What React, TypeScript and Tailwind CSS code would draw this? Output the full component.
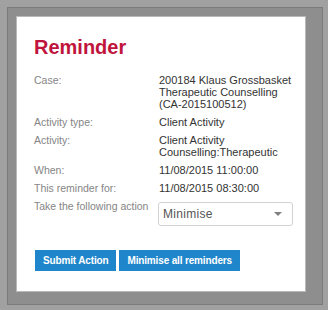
import React from 'react';

// Reminder dialog over a dimmed page.

const FONT = { fontFamily: '"Liberation Sans", Arial, sans-serif' };

interface Row {
  label: string;
  lines: string[];
}

const ROWS: Row[] = [
  {
    label: 'Case:',
    lines: ['200184 Klaus Grossbasket', 'Therapeutic Counselling', '(CA-2015100512)'],
  },
  { label: 'Activity type:', lines: ['Client Activity'] },
  { label: 'Activity:', lines: ['Client Activity', 'Counselling:Therapeutic'] },
  { label: 'When:', lines: ['11/08/2015 11:00:00'] },
  { label: 'This reminder for:', lines: ['11/08/2015 08:30:00'] },
];

function Caret() {
  return (
    <svg width="8" height="4" viewBox="0 0 8 4" className="mr-[10px]">
      <path d="M0 0 L8 0 L4 4 Z" fill="#808080" />
    </svg>
  );
}

export default function App() {
  return (
    <div className="w-[328px] h-[310px] bg-[#a1a1a1] pt-[7px] pl-[7px] overflow-hidden" style={FONT}>
      <div className="w-[316px] h-[298px] bg-[#8e8e8e] border border-[#7b7b7b] pt-[8px] pl-[8px]">
        <div className="w-[290px] h-[276px] bg-white border border-[#b9b9b9] pt-[18px] pl-[17px] pr-[11px]">
          <h1 className="text-[20px] leading-[24px] font-bold text-[#c0143c]">Reminder</h1>

          <div className="mt-[15px] grid grid-cols-[125px_135px] gap-y-[6px] leading-[12px]">
            {ROWS.map((row) => (
              <React.Fragment key={row.label}>
                <div className="text-[10.5px] text-[#858585]">{row.label}</div>
                <div className="text-[11px] text-[#333]">
                  {row.lines.map((l) => (
                    <div key={l}>{l}</div>
                  ))}
                </div>
              </React.Fragment>
            ))}
            <div className="text-[10.5px] text-[#858585]">Take the following action</div>
            <div className="-ml-px mt-[2px] h-[24px] w-[135px] rounded-[3px] border border-[#d2d2d2] bg-white flex items-center justify-between pl-[4px]">
              <span className="text-[12px] text-[#555] tracking-[0.3px]">Minimise</span>
              <Caret />
            </div>
          </div>

          <div className="mt-[24px] ml-px flex gap-[3px]">
            <button
              type="button"
              className="h-[21px] px-[8px] bg-[#1f86cb] text-white text-[10px] font-bold tracking-[-0.15px]"
            >
              Submit Action
            </button>
            <button
              type="button"
              className="h-[21px] px-[8px] bg-[#1f86cb] text-white text-[10px] font-bold tracking-[-0.15px]"
            >
              Minimise all reminders
            </button>
          </div>
        </div>
      </div>
    </div>
  );
}
